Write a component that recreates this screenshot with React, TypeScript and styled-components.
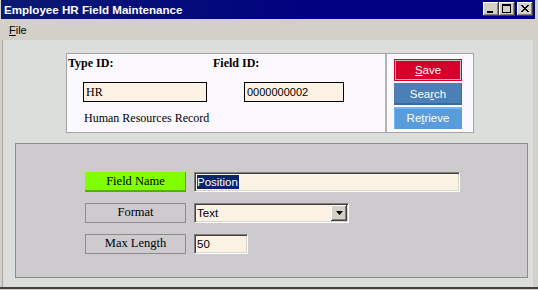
import React from 'react';
import styled, { createGlobalStyle } from 'styled-components';

const Global = createGlobalStyle`
  html, body { margin: 0; padding: 0; background: #d4d0c8; }
  body { width: 538px; height: 290px; overflow: hidden; }
  * { box-sizing: border-box; }
`;

const Window = styled.div`
  width: 538px;
  height: 289px;
  background: #d4d0c8;
  padding: 0 3px 0 1px;
  border-bottom: 2px solid #404040;
  display: flex;
  flex-direction: column;
`;

const TitleBar = styled.div`
  height: 19px;
  flex: none;
  display: flex;
  align-items: center;
  padding: 0 2px 1px 3px;
  background: linear-gradient(90deg, #0a1a72 0%, #000080 60%, #000080 100%);
`;

const TitleText = styled.span`
  font: bold 11.6px "Liberation Sans", Arial, sans-serif;
  color: #ffffff;
  white-space: nowrap;
  flex: 1;
`;

const CaptionButton = styled.div<{ $gap?: number }>`
  width: 16px;
  height: 14px;
  margin-left: ${(p) => p.$gap ?? 0}px;
  background: #d4d0c8;
  box-shadow: inset -1px -1px #404040, inset 1px 1px #ffffff, inset -2px -2px #808080;
  svg { display: block; }
`;

const MenuBar = styled.div`
  height: 21px;
  flex: none;
  display: flex;
  align-items: center;
  padding: 1px 0 0 8px;
  font: 11px "Liberation Sans", Arial, sans-serif;
  color: #000;
  u { text-decoration: underline; text-underline-offset: 1px; }
`;

const Client = styled.div`
  flex: 1;
  margin: 0 2px 0 1px;
  background: #dcdedb;
  border-left: 1px solid #a8a8a4;
  display: flex;
  flex-direction: column;
  align-items: flex-start;
  padding-top: 13px;
`;

const TopPanel = styled.div`
  margin-left: 63px;
  width: 408px;
  height: 80px;
  display: flex;
  background: #fbf9fd;
  border: 1px solid #a4a4a4;
`;

const IdSection = styled.div`
  width: 318px;
  padding: 2px 0 0 1px;
  display: grid;
  grid-template-columns: 145px 1fr;
  grid-template-rows: 14px 20px 14px;
  row-gap: 12px;
  align-content: start;
  font: 12px "Liberation Serif", "Times New Roman", serif;
  color: #000;
`;

const IdLabel = styled.div`
  font-weight: bold;
  line-height: 14px;
`;

const IdInput = styled.div<{ $indent: number; $width: number; $sans?: boolean }>`
  margin-left: ${(p) => p.$indent}px;
  width: ${(p) => p.$width}px;
  height: 20px;
  border: 1px solid #000;
  background: #fcf2e4;
  padding: 0 0 0 2px;
  font: ${(p) => (p.$sans ? '11px "Liberation Sans", Arial, sans-serif' : '12px "Liberation Serif", "Times New Roman", serif')};
  line-height: 18px;
`;

const Caption = styled.div`
  margin: -3px 0 0 16px;
  line-height: 14px;
  white-space: nowrap;
  grid-column: 1 / span 2;
`;

const Separator = styled.div`
  width: 2px;
  background: #b4b4b4;
`;

const ButtonSection = styled.div`
  flex: 1;
  padding: 5px 0 0 7px;
  display: flex;
  flex-direction: column;
  gap: 2px;
`;

const ActionButton = styled.div<{ $kind: 'save' | 'search' | 'retrieve' }>`
  width: 68px;
  height: 22px;
  display: flex;
  align-items: center;
  justify-content: center;
  font: 11.5px "Liberation Sans", Arial, sans-serif;
  color: #ffffff;
  padding-bottom: 1px;
  background: ${(p) => (p.$kind === 'save' ? '#d7002b' : p.$kind === 'search' ? '#4a80b5' : '#589cdc')};
  box-shadow: ${(p) =>
    p.$kind === 'save'
      ? 'inset 0 0 0 1px #d7002b, inset 0 0 0 2px #c4c0c4'
      : p.$kind === 'search'
      ? 'inset 0 -2px #3a6b9c, inset -1px 0 #3a6b9c'
      : 'inset 0 2px #74b6f2, inset 1px 0 #74b6f2'};
  u { text-decoration: underline; text-underline-offset: 1px; }
`;

const LowerPanel = styled.div`
  margin: 10px 0 0 12px;
  width: 513px;
  height: 135px;
  background: #cdcbce;
  border: 1px solid #8c8c8c;
  padding: 28px 0 0 69px;
  display: grid;
  grid-template-columns: 101px auto;
  grid-auto-rows: 20px;
  column-gap: 8px;
  row-gap: 11px;
  align-content: start;
  justify-content: start;
`;

const FieldLabel = styled.div<{ $active?: boolean }>`
  height: 20px;
  display: flex;
  align-items: center;
  justify-content: center;
  font: 12.5px "Liberation Serif", "Times New Roman", serif;
  color: #000;
  padding-bottom: 1px;
  background: ${(p) => (p.$active ? '#80ff00' : '#cdcbce')};
  border: ${(p) => (p.$active ? 'none' : '1px solid #8c8c8c')};
  box-shadow: ${(p) => (p.$active ? 'inset 0 -2px #5aac00, inset -1px 0 #5aac00' : 'none')};
`;

const Sunken = styled.div<{ $width: number }>`
  position: relative;
  width: ${(p) => p.$width}px;
  height: 20px;
  background: #fcf2e4;
  border-top: 1px solid #808080;
  border-left: 1px solid #808080;
  border-right: 1px solid #ffffff;
  border-bottom: 1px solid #ffffff;
  box-shadow: inset 1px 1px #404040, inset -1px -1px #d8d4cc;
  padding: 0 0 0 2px;
  display: flex;
  align-items: center;
  font: 11.5px "Liberation Sans", Arial, sans-serif;
  color: #000;
`;

const Selected = styled.span`
  background: #0a246a;
  color: #fff;
  line-height: 14px;
  padding: 0 1px 0 0;
`;

const DropButton = styled.div`
  position: absolute;
  right: 1px;
  top: 1px;
  width: 16px;
  height: 16px;
  background: #d4d0c8;
  box-shadow: inset -1px -1px #404040, inset 1px 1px #ffffff, inset -2px -2px #808080;
  display: flex;
  align-items: center;
  justify-content: center;
  svg { display: block; }
`;

export default function App() {
  return (
    <>
      <Global />
      <Window>
        <TitleBar>
          <TitleText>Employee HR Field Maintenance</TitleText>
          <CaptionButton>
            <svg width="16" height="14" viewBox="0 0 16 14">
              <rect x="4" y="9" width="6" height="2" fill="#000" />
            </svg>
          </CaptionButton>
          <CaptionButton>
            <svg width="16" height="14" viewBox="0 0 16 14">
              <rect x="3.5" y="2.5" width="8" height="8" fill="none" stroke="#000" />
              <rect x="3" y="2" width="9" height="2" fill="#000" />
            </svg>
          </CaptionButton>
          <CaptionButton $gap={2}>
            <svg width="16" height="14" viewBox="0 0 16 14">
              <path d="M4 3 L11 10 M5 3 L12 10 M11 3 L4 10 M12 3 L5 10" stroke="#000" strokeWidth="1" shapeRendering="crispEdges" />
            </svg>
          </CaptionButton>
        </TitleBar>
        <MenuBar>
          <span><u>F</u>ile</span>
        </MenuBar>
        <Client>
          <TopPanel>
            <IdSection>
              <IdLabel>Type ID:</IdLabel>
              <IdLabel>Field ID:</IdLabel>
              <IdInput $indent={15} $width={124}>HR</IdInput>
              <IdInput $indent={31} $width={100} $sans>0000000002</IdInput>
              <Caption>Human Resources Record</Caption>
            </IdSection>
            <Separator />
            <ButtonSection>
              <ActionButton $kind="save"><span><u>S</u>ave</span></ActionButton>
              <ActionButton $kind="search"><span>Sea<u>r</u>ch</span></ActionButton>
              <ActionButton $kind="retrieve"><span>Re<u>t</u>rieve</span></ActionButton>
            </ButtonSection>
          </TopPanel>
          <LowerPanel>
            <FieldLabel $active>Field Name</FieldLabel>
            <Sunken $width={266}><Selected>Position</Selected></Sunken>
            <FieldLabel>Format</FieldLabel>
            <Sunken $width={155}>
              Text
              <DropButton>
                <svg width="7" height="4" viewBox="0 0 7 4">
                  <path d="M0 0 H7 L3.5 4 Z" fill="#000" />
                </svg>
              </DropButton>
            </Sunken>
            <FieldLabel>Max Length</FieldLabel>
            <Sunken $width={54}>50</Sunken>
          </LowerPanel>
        </Client>
      </Window>
    </>
  );
}
